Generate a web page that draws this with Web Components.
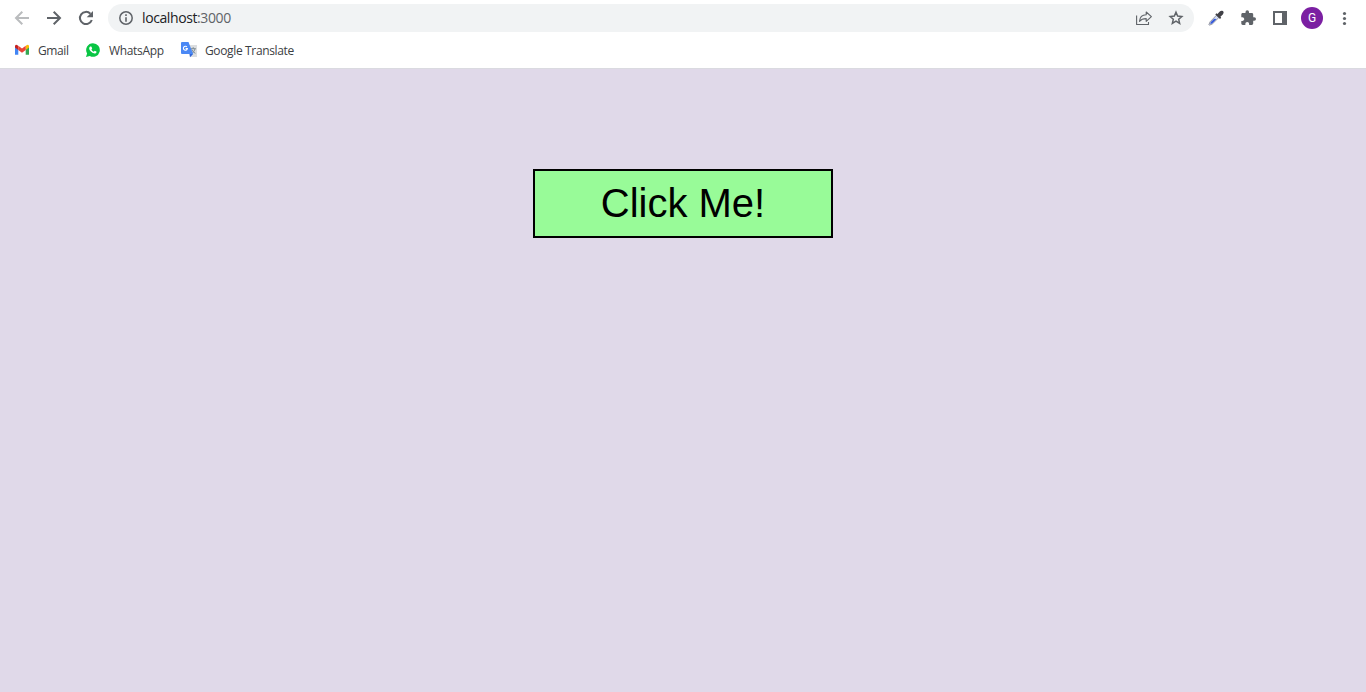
<!DOCTYPE html>
<html lang="en">
<head>
<meta charset="utf-8">
<title>localhost:3000</title>
<style>
html, body { margin: 0; height: 100%; }
body { overflow: hidden; font-family: "Open Sans", "Noto Sans", sans-serif; }
</style>
</head>
<body>
<browser-window></browser-window>
<script>
const ICONS = {
  back: '<g fill="none" stroke="#babcbe" stroke-width="2"><path d="M17 10H4.5M10.3 3.7 4 10l6.3 6.3"/></g>',
  forward: '<g fill="none" stroke="#5f6368" stroke-width="2"><path d="M3 10h12.5M9.7 3.7 16 10l-6.300 6.300"/></g>',
  reload: '<path fill="none" stroke="#5f6368" stroke-width="2" d="M15.800 12A6.100 6.100 0 1 1 14.400 5.700"/><path fill="#5f6368" d="M17 3v6.300h-6.300z"/>',
  info: '<circle cx="10" cy="10" r="6.200" fill="none" stroke="#5f6368" stroke-width="1.500"/><path fill="#5f6368" d="M9.200 9.200h1.600v4.500H9.200zM9.200 6.300h1.600v1.600H9.200z"/>',
  share: '<g fill="none" stroke="#5f6368" stroke-width="1.100" stroke-linejoin="round"><path d="M2.600 7.500v9h11.900v-2.500"/><path d="M5.500 13.300c.3-4.200 2.500-6.500 6.700-6.600V4l5.200 4.700-5.200 4.600v-2.700c-3.200 0-5.100.7-6.700 2.700z"/></g>',
  star: '<path fill="none" stroke="#5f6368" stroke-width="1.500" d="m10 4.200 1.650 3.900 4.200.4-3.150 2.800.95 4.100L10 13.200l-3.650 2.200.95-4.100L4.150 8.500l4.200-.4z"/>',
  picker: '<path d="m10.500 7.200 2.400 2.300-6.500 6.400-3 1.300-.5-.5 1.300-3z" fill="#d3dcf2" stroke="#8a8d9a" stroke-width=".9"/><path d="m8.200 10.800 2.300.2-4.400 4.400-1.900.7.700-2z" fill="#3156d9"/><path d="m9.300 6.500 1.200-1.200 1 .8 2-2.300q1.600-1.600 3.600-.7 1.300 1.700-.3 3.500l-2.400 2.100.8 1-1.200 1.200z" fill="#414147"/>',
  puzzle: '<path fill="#5f6368" transform="translate(1.900 1.600) scale(.7)" d="M20.500 11H19V7c0-1.100-.9-2-2-2h-4V3.500a2.500 2.500 0 0 0-5 0V5H4c-1.100 0-1.990.9-1.990 2v3.800H3.500c1.490 0 2.700 1.210 2.700 2.700s-1.210 2.700-2.700 2.700H2V20c0 1.100.9 2 2 2h3.800v-1.500c0-1.490 1.210-2.700 2.700-2.700s2.700 1.210 2.700 2.700V22H17c1.100 0 2-.9 2-2v-4h1.500a2.500 2.500 0 0 0 0-5z"/>',
  panel: '<path fill="#5f6368" fill-rule="evenodd" d="M3 3h14v14H3zm2 2v10h7V5z"/>',
  menu: '<g fill="#5f6368"><circle cx="10.500" cy="5.500" r="1.600"/><circle cx="10.500" cy="10.500" r="1.600"/><circle cx="10.500" cy="15.500" r="1.600"/></g>',
  gmail: '<path fill="#4285f4" d="M3 6.500v8.300h3.300V8.500z"/><path fill="#34a853" d="M13.700 14.800H17V6.500l-3.300 2z"/><path fill="#fbbc04" d="M13.700 6v4L17 7.500V6q-.6-2-2.500-.8z"/><path fill="#c5221f" d="M3 6v1.500L6.300 10V6l-.8-.8Q3.600 4 3 6z"/><path fill="#ea4335" d="M6.300 10V5.800L10 8.600l3.700-2.800V10L10 12.700z"/>',
  whatsapp: '<path fill="#09c544" d="M10 3.200a6.800 6.800 0 0 0-5.900 10.200L3 17l3.800-1A6.800 6.800 0 1 0 10 3.200z"/><path fill="#fff" d="M7.200 6.500h.9q.4 0 .5.500l.6 1.400-.8 1q.9 1.600 2.400 2.300l.9-.9 1.600.7q.3.200.2.700-.3 1.200-1.800 1.200-2.400-.2-4.300-2.300Q5.100 8 7.200 6.500z"/>',
  translate: '<path fill="#dcdee0" d="M9 4.900h9V17h-7z"/><g fill="none" stroke="#7e8c94" stroke-width="1"><path d="M11.700 8.700h5.200M14.200 7.200v1.500M16 9q-.8 3-3.300 4.600M12.800 9.500q1 2.800 3.600 3.800"/></g><path fill="#3367d6" d="M10.500 14h3.700L11 17.200z"/><path fill="#4a88f5" d="M3 2h6.500l4.700 12H3q-1 0-1-1V3q0-1 1-1z"/><path fill="none" stroke="#fff" stroke-width="1.100" d="M7.900 6.900A2 2 0 1 0 8.400 8.600H6.600"/>'
};

function define(name, html, setup) {
  const template = document.createElement('template');
  template.innerHTML = html;
  customElements.define(name, class extends HTMLElement {
    constructor() {
      super();
      this.attachShadow({ mode: 'open' }).append(template.content.cloneNode(true));
    }
    connectedCallback() { if (setup) setup(this, this.shadowRoot); }
  });
}

define('ui-icon', `<style>
  :host { display: block; width: 20px; height: 20px; flex: none; }
  svg { display: block; width: 20px; height: 20px; }
</style><svg viewBox="0 0 20 20" aria-hidden="true"></svg>`, (el, root) => {
  root.querySelector('svg').innerHTML = ICONS[el.getAttribute('name')];
});

define('address-bar', `<style>
  :host { display: flex; align-items: center; box-sizing: border-box; flex: 1; height: 28px; padding: 0 8px; border-radius: 14px; background: #f1f3f4; }
  .url { flex: 1; margin-left: 6px; font-size: 14px; line-height: 20px; letter-spacing: -.4px; color: #202124; white-space: nowrap; }
  .port { color: #5f6368; }
  .actions { display: flex; gap: 12px; }
</style><ui-icon name="info"></ui-icon><div class="url">localhost<span class="port">:3000</span></div>
<div class="actions"><ui-icon name="share"></ui-icon><ui-icon name="star"></ui-icon></div>`);

define('user-avatar', `<style>
  :host { display: grid; place-items: center; width: 22px; height: 22px; margin: 0 -1px; border-radius: 50%; background: #7b1fa2; color: #fff; font: 12px/22px Roboto, sans-serif; }
</style><slot></slot>`);

define('browser-toolbar', `<style>
  :host { display: flex; align-items: center; height: 36px; padding: 0 12px; box-sizing: border-box; }
  .nav, .tools { display: flex; align-items: center; gap: 12px; }
  .nav { margin-right: 12px; }
  .tools { margin-left: 12px; }
</style><div class="nav"><ui-icon name="back"></ui-icon><ui-icon name="forward"></ui-icon><ui-icon name="reload"></ui-icon></div>
<address-bar></address-bar>
<div class="tools"><ui-icon name="picker"></ui-icon><ui-icon name="puzzle"></ui-icon><ui-icon name="panel"></ui-icon><user-avatar>G</user-avatar><ui-icon name="menu"></ui-icon></div>`);

define('bookmark-item', `<style>
  :host { display: flex; align-items: flex-start; gap: 6px; font-size: 12px; line-height: 21px; color: #3c4043; white-space: nowrap; }
</style><slot name="icon"></slot><span><slot></slot></span>`);

define('bookmark-bar', `<style>
  :host { display: flex; align-items: flex-start; height: 33px; padding: 4px 12px 0; box-sizing: border-box; border-bottom: 1px solid #dadae0; }
  bookmark-item { box-sizing: border-box; }
  .gmail { width: 71px; letter-spacing: -.4px; }
  .whatsapp { width: 96px; letter-spacing: -.33px; }
  .translate { letter-spacing: -.35px; }
</style><bookmark-item class="gmail"><ui-icon slot="icon" name="gmail"></ui-icon>Gmail</bookmark-item>
<bookmark-item class="whatsapp"><ui-icon slot="icon" name="whatsapp"></ui-icon>WhatsApp</bookmark-item>
<bookmark-item class="translate"><ui-icon slot="icon" name="translate"></ui-icon>Google Translate</bookmark-item>`);

define('click-button', `<style>
  :host { display: block; width: 300px; height: 69px; }
  button { display: block; width: 100%; height: 100%; margin: 0; padding: 0; border: 2px solid #000; border-radius: 0; background: #98fb98; color: #000; font: 40px/normal "Liberation Sans", Arial, sans-serif; }
</style><button type="button"><slot></slot></button>`);

define('browser-window', `<style>
  :host { display: flex; flex-direction: column; height: 100%; background: #fff; }
  main { flex: 1; display: flex; justify-content: center; align-items: flex-start; padding-top: 100px; background: #e0d9e9; }
</style><browser-toolbar></browser-toolbar><bookmark-bar></bookmark-bar><main><click-button>Click Me!</click-button></main>`);
</script>
</body>
</html>
